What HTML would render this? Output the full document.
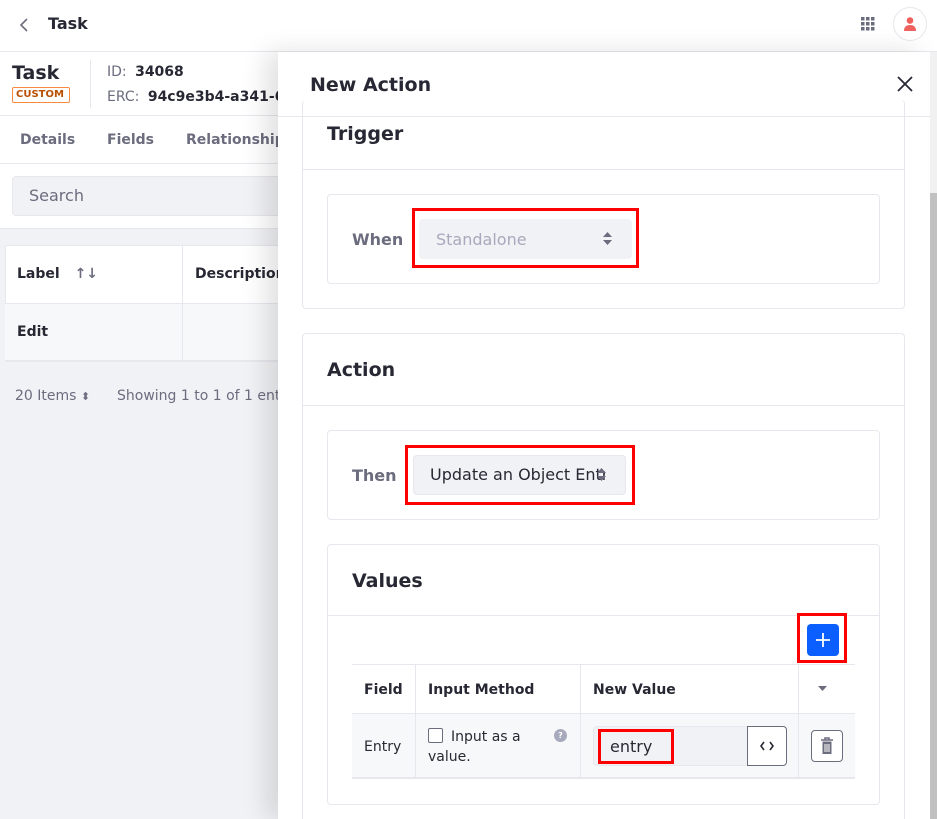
<!DOCTYPE html>
<html style="width:937px;height:819px;overflow:hidden"><head><meta charset="utf-8"><style>
*{box-sizing:border-box;margin:0;padding:0}
body{width:937px;height:819px;overflow:hidden;background:#f1f2f5;font-family:"DejaVu Sans","Liberation Sans",sans-serif;color:#272833;position:relative}
.a{position:absolute}
.b{font-weight:bold}
.red{position:absolute;border:3px solid #f00}
</style></head><body>
<div class="a" style="left:0;top:0;width:937px;height:52px;background:#fff;border-bottom:1px solid #e7e7ed"></div>
<svg class="a" style="left:18px;top:17px" width="12" height="16" viewBox="0 0 12 16"><path d="M9 2 L3 8 L9 14" fill="none" stroke="#6b6c7e" stroke-width="1.6"/></svg>
<div class="a b" style="left:48px;top:14px;font-size:16px">Task</div>
<svg class="a" style="left:861px;top:17px" width="14" height="14"><g fill="#6b6c7e"><rect x="0" y="0" width="3.5" height="3.5"/><rect x="5" y="0" width="3.5" height="3.5"/><rect x="10" y="0" width="3.5" height="3.5"/><rect x="0" y="5" width="3.5" height="3.5"/><rect x="5" y="5" width="3.5" height="3.5"/><rect x="10" y="5" width="3.5" height="3.5"/><rect x="0" y="10" width="3.5" height="3.5"/><rect x="5" y="10" width="3.5" height="3.5"/><rect x="10" y="10" width="3.5" height="3.5"/></g></svg>
<div class="a" style="left:893px;top:7px;width:34px;height:34px;border-radius:50%;border:1px solid #e7e7ed;background:#fff"></div>
<svg class="a" style="left:902px;top:16px" width="16" height="16"><circle cx="8" cy="4.5" r="3.3" fill="#f0605d"/><path d="M2 15 Q2 9 8 9 Q14 9 14 15Z" fill="#f0605d"/></svg>
<div class="a" style="left:0;top:52px;width:300px;height:177px;background:#fff"></div>
<div class="a b" style="left:12px;top:62px;font-size:19px">Task</div>
<div class="a b" style="left:12px;top:87px;font-size:10px;color:#b95000;border:1px solid #f48b3e;padding:0 3px;line-height:14px;border-radius:2px;width:58px">CUSTOM</div>
<div class="a" style="left:90px;top:60px;width:1px;height:48px;background:#e7e7ed"></div>
<div class="a" style="left:107px;top:64px;font-size:14px;color:#6b6c7e">ID: <b style="color:#272833;margin-left:4px">34068</b></div>
<div class="a" style="left:107px;top:89px;font-size:14px;color:#6b6c7e;white-space:nowrap">ERC: <b style="color:#272833;margin-left:4px">94c9e3b4-a341-6</b></div>
<div class="a" style="left:0;top:115px;width:300px;height:1px;background:#e7e7ed"></div>
<div class="a b" style="left:20px;top:132px;font-size:14px;color:#6b6c7e">Details</div>
<div class="a b" style="left:107px;top:132px;font-size:14px;color:#6b6c7e">Fields</div>
<div class="a b" style="left:186px;top:132px;font-size:14px;color:#6b6c7e;white-space:nowrap">Relationships</div>
<div class="a" style="left:0;top:163px;width:300px;height:1px;background:#e7e7ed"></div>
<div class="a" style="left:12px;top:176px;width:290px;height:40px;background:#f1f2f5;border:1px solid #e7e7ed;border-radius:4px"></div>
<div class="a" style="left:29px;top:186px;font-size:16px;color:#6b6c7e">Search</div>
<div class="a" style="left:0;top:228px;width:300px;height:1px;background:#e7e7ed"></div>
<div class="a" style="left:5px;top:245px;width:300px;height:117px;background:#fff;border:1px solid #e7e7ed"></div>
<div class="a" style="left:5px;top:303px;width:300px;height:59px;background:#f7f8f9;border-top:1px solid #e7e7ed;border-bottom:2px solid #e7e7ed"></div>
<div class="a" style="left:182px;top:246px;width:1px;height:115px;background:#e7e7ed"></div>
<div class="a b" style="left:17px;top:266px;font-size:14px">Label <span style="color:#6b6c7e;font-weight:bold;margin-left:10px">↑↓</span></div>
<div class="a b" style="left:195px;top:266px;font-size:14px">Description</div>
<div class="a b" style="left:17px;top:324px;font-size:14px">Edit</div>
<div class="a" style="left:15px;top:388px;font-size:14px;color:#6b6c7e">20 Items <span style="font-size:11px">⬍</span></div>
<div class="a" style="left:117px;top:388px;font-size:14px;color:#6b6c7e;white-space:nowrap">Showing 1 to 1 of 1 entries</div>
<div class="a" style="left:278px;top:52px;width:652px;height:767px;background:#fff;box-shadow:-12px 0 24px rgba(0,0,0,.12)"></div>
<div class="a" style="left:930px;top:52px;width:7px;height:767px;background:#f1f1f1"></div>
<div class="a" style="left:930px;top:193px;width:7px;height:626px;background:#c1c1c1"></div>
<div class="a b" style="left:310px;top:74px;font-size:19px">New Action</div>
<svg class="a" style="left:897px;top:76px" width="16" height="16"><path d="M1 1L15 15M15 1L1 15" stroke="#272833" stroke-width="1.8"/></svg>
<div class="a" style="left:302px;top:100px;width:603px;height:209px;border:1px solid #e7e7ed;border-radius:4px;border-top:none"></div>
<div class="a" style="left:278px;top:116px;width:652px;height:1px;background:#e7e7ed"></div>
<div class="a b" style="left:327px;top:123px;font-size:19px">Trigger</div>
<div class="a" style="left:303px;top:169px;width:601px;height:1px;background:#e7e7ed"></div>
<div class="a" style="left:327px;top:194px;width:553px;height:90px;border:1px solid #e7e7ed;border-radius:4px"></div>
<div class="a b" style="left:352px;top:230px;font-size:16px;color:#6b6c7e">When</div>
<div class="a" style="left:419px;top:219px;width:213px;height:40px;background:#f1f2f5;border-radius:4px"></div>
<div class="a" style="left:436px;top:230px;font-size:16px;color:#a7a9bc">Standalone</div>
<svg class="a" style="left:602px;top:231px" width="11" height="15"><path d="M1 6L5.5 1L10 6ZM1 9L5.5 14L10 9Z" fill="#6b6c7e"/></svg>
<div class="red" style="left:412px;top:208px;width:227px;height:60px"></div>
<div class="a" style="left:302px;top:333px;width:603px;height:486px;border:1px solid #e7e7ed;border-bottom:none;border-radius:4px 4px 0 0"></div>
<div class="a b" style="left:327px;top:359px;font-size:19px">Action</div>
<div class="a" style="left:303px;top:405px;width:601px;height:1px;background:#e7e7ed"></div>
<div class="a" style="left:327px;top:430px;width:553px;height:90px;border:1px solid #e7e7ed;border-radius:4px"></div>
<div class="a b" style="left:352px;top:466px;font-size:16px;color:#6b6c7e">Then</div>
<div class="a" style="left:413px;top:455px;width:213px;height:40px;background:#f1f2f5;border:1px solid #e7e7ed;border-radius:4px;overflow:hidden"></div>
<div class="a" style="left:430px;top:465px;font-size:16px;white-space:nowrap;width:175px;overflow:hidden">Update an Object Entry</div>
<svg class="a" style="left:596px;top:467px" width="11" height="15"><path d="M1 6L5.5 1L10 6ZM1 9L5.5 14L10 9Z" fill="#6b6c7e"/></svg>
<div class="red" style="left:405px;top:445px;width:230px;height:60px"></div>
<div class="a" style="left:327px;top:544px;width:553px;height:261px;border:1px solid #e7e7ed;border-radius:4px"></div>
<div class="a b" style="left:352px;top:570px;font-size:19px">Values</div>
<div class="a" style="left:328px;top:615px;width:551px;height:1px;background:#e7e7ed"></div>
<div class="a" style="left:807px;top:624px;width:32px;height:32px;background:#0b5fff;border-radius:4px"></div>
<svg class="a" style="left:815px;top:632px" width="16" height="16"><path d="M8 1V15M1 8H15" stroke="#fff" stroke-width="1.8"/></svg>
<div class="red" style="left:797px;top:613px;width:50px;height:50px"></div>
<div class="a" style="left:352px;top:664px;width:503px;height:1px;background:#e7e7ed"></div>
<div class="a" style="left:352px;top:713px;width:503px;height:66px;background:#f7f8f9;border-top:1px solid #e7e7ed;border-bottom:2px solid #e7e7ed"></div>
<div class="a" style="left:415px;top:665px;width:1px;height:113px;background:#e7e7ed"></div>
<div class="a" style="left:580px;top:665px;width:1px;height:113px;background:#e7e7ed"></div>
<div class="a" style="left:798px;top:665px;width:1px;height:113px;background:#e7e7ed"></div>
<div class="a b" style="left:364px;top:682px;font-size:14px">Field</div>
<div class="a b" style="left:428px;top:682px;font-size:14px">Input Method</div>
<div class="a b" style="left:593px;top:682px;font-size:14px">New Value</div>
<svg class="a" style="left:818px;top:686px" width="10" height="6"><path d="M0 0H9L4.5 5Z" fill="#6b6c7e"/></svg>
<div class="a" style="left:364px;top:739px;font-size:14px">Entry</div>
<div class="a" style="left:428px;top:728px;width:15px;height:15px;border:1px solid #6b6c7e;border-radius:2px;background:#fff"></div>
<div class="a" style="left:451px;top:727px;font-size:14px;line-height:20px;color:#272833">Input as a<br><span style="margin-left:-23px">value.</span></div>
<div class="a" style="left:554px;top:729px;width:13px;height:13px;border-radius:50%;background:#a7a9bc;color:#fff;font-size:8px;text-align:center;line-height:13px;font-weight:bold">?</div>
<div class="a" style="left:593px;top:726px;width:194px;height:40px;background:#f1f2f5;border:1px solid #e7e7ed;border-radius:4px"></div>
<div class="a" style="left:747px;top:726px;width:40px;height:40px;background:#fff;border:1px solid #6b6c7e;border-radius:0 4px 4px 0"></div>
<svg class="a" style="left:760px;top:741px" width="14" height="10"><path d="M4 1L1 5L4 9M10 1L13 5L10 9" fill="none" stroke="#272833" stroke-width="1.6"/></svg>
<div class="a" style="left:610px;top:737px;font-size:16px">entry</div>
<div class="red" style="left:598px;top:729px;width:76px;height:35px"></div>
<div class="a" style="left:811px;top:730px;width:32px;height:32px;background:#fff;border:1px solid #6b6c7e;border-radius:4px"></div>
<svg class="a" style="left:820px;top:737px" width="14" height="18"><path d="M1 3H13M5 3V1H9V3" fill="none" stroke="#6b6c7e" stroke-width="1.5"/><path d="M2.5 4.5H11.5V17H2.5Z" fill="#6b6c7e"/><path d="M5 7V15M7 7V15M9 7V15" stroke="#fff" stroke-width="1"/></svg>
</body></html>
